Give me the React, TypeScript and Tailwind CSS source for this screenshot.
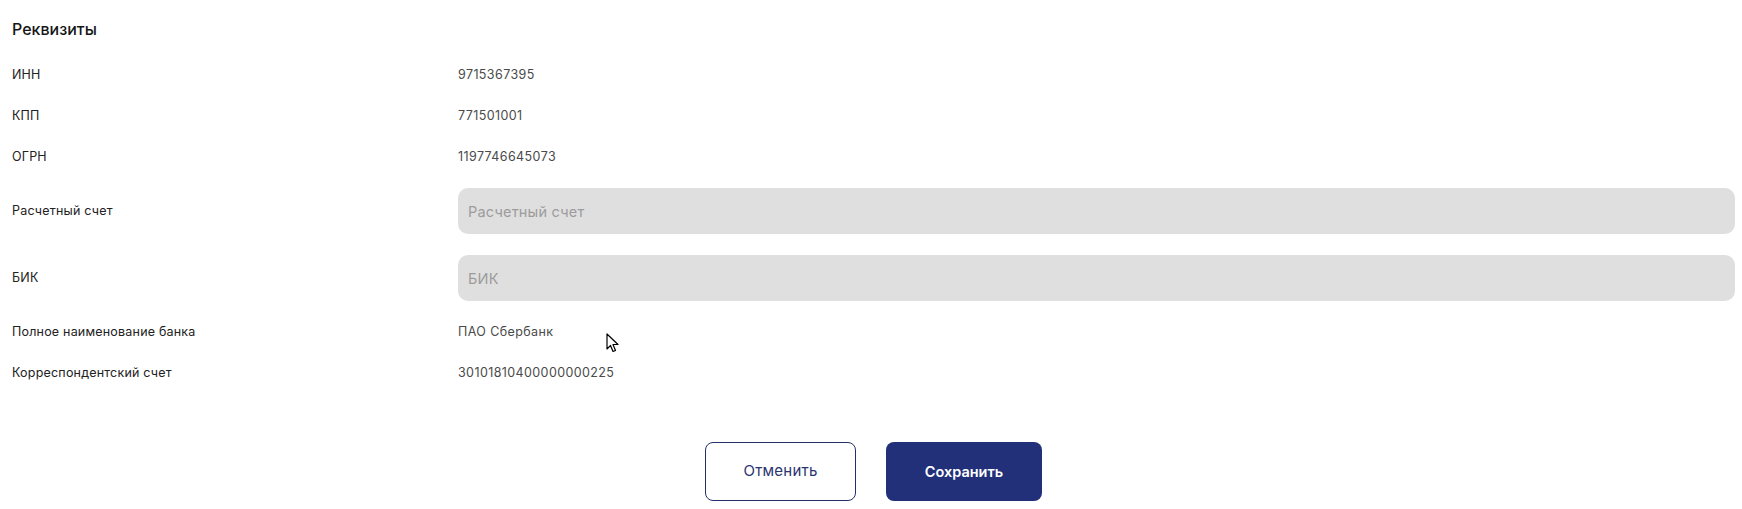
import React from 'react'

type Row = { label: string; value?: string; placeholder?: string }

const ROWS: Row[] = [
  { label: 'ИНН', value: '9715367395' },
  { label: 'КПП', value: '771501001' },
  { label: 'ОГРН', value: '1197746645073' },
  { label: 'Расчетный счет', placeholder: 'Расчетный счет' },
  { label: 'БИК', placeholder: 'БИК' },
  { label: 'Полное наименование банка', value: 'ПАО Сбербанк' },
  { label: 'Корреспондентский счет', value: '30101810400000000225' },
]

const Cursor: React.FC = () => (
  <svg className="absolute left-[606px] top-[333px]" width="13" height="20" viewBox="0 0 13 20">
    <path d="M1 1 L1 16 L4.5 12.5 L7 18.5 L9.5 17.5 L7 11.5 L12 11.5 Z" fill="#fff" stroke="#000" strokeWidth="1.2" strokeLinejoin="round" />
  </svg>
)

export default function App() {
  return (
    <div className="relative min-h-[509px] bg-white pl-3 pr-[7px] pt-[17px] font-['Inter','Noto_Sans',sans-serif]">
      {/* Title */}
      <h2 className="text-[16px] leading-6 font-medium text-[#161616]">Реквизиты</h2>

      {/* Rows */}
      <div className="mt-[24px] flex flex-col gap-[21px]">
        {ROWS.map((r) => (
          <div key={r.label} className="grid grid-cols-[446px_1fr] items-center">
            <span className="text-[12.5px] leading-5 tracking-[0.2px] text-[#222]">{r.label}</span>
            {r.placeholder ? (
              <input
                placeholder={r.placeholder}
                className="h-[46px] w-full rounded-[10px] bg-[#dfdfdf] px-[10px] text-[14.5px] tracking-[0.2px] text-[#333] placeholder:text-[#9c9c9c] outline-none"
              />
            ) : (
              <span className="text-[12.5px] leading-5 tracking-[0.4px] text-[#4a4a4a]">{r.value}</span>
            )}
          </div>
        ))}
      </div>

      {/* Actions */}
      <div className="mt-[59px] flex justify-center gap-[30px]">
        <button className="h-[59px] w-[151px] rounded-[8px] border border-[#25306b] bg-white text-[15px] font-normal tracking-[0.2px] text-[#2a3470]">
          Отменить
        </button>
        <button className="h-[59px] w-[156px] rounded-[8px] bg-[#22307a] text-[14.5px] font-semibold text-white">
          Сохранить
        </button>
      </div>

      <Cursor />
    </div>
  )
}
